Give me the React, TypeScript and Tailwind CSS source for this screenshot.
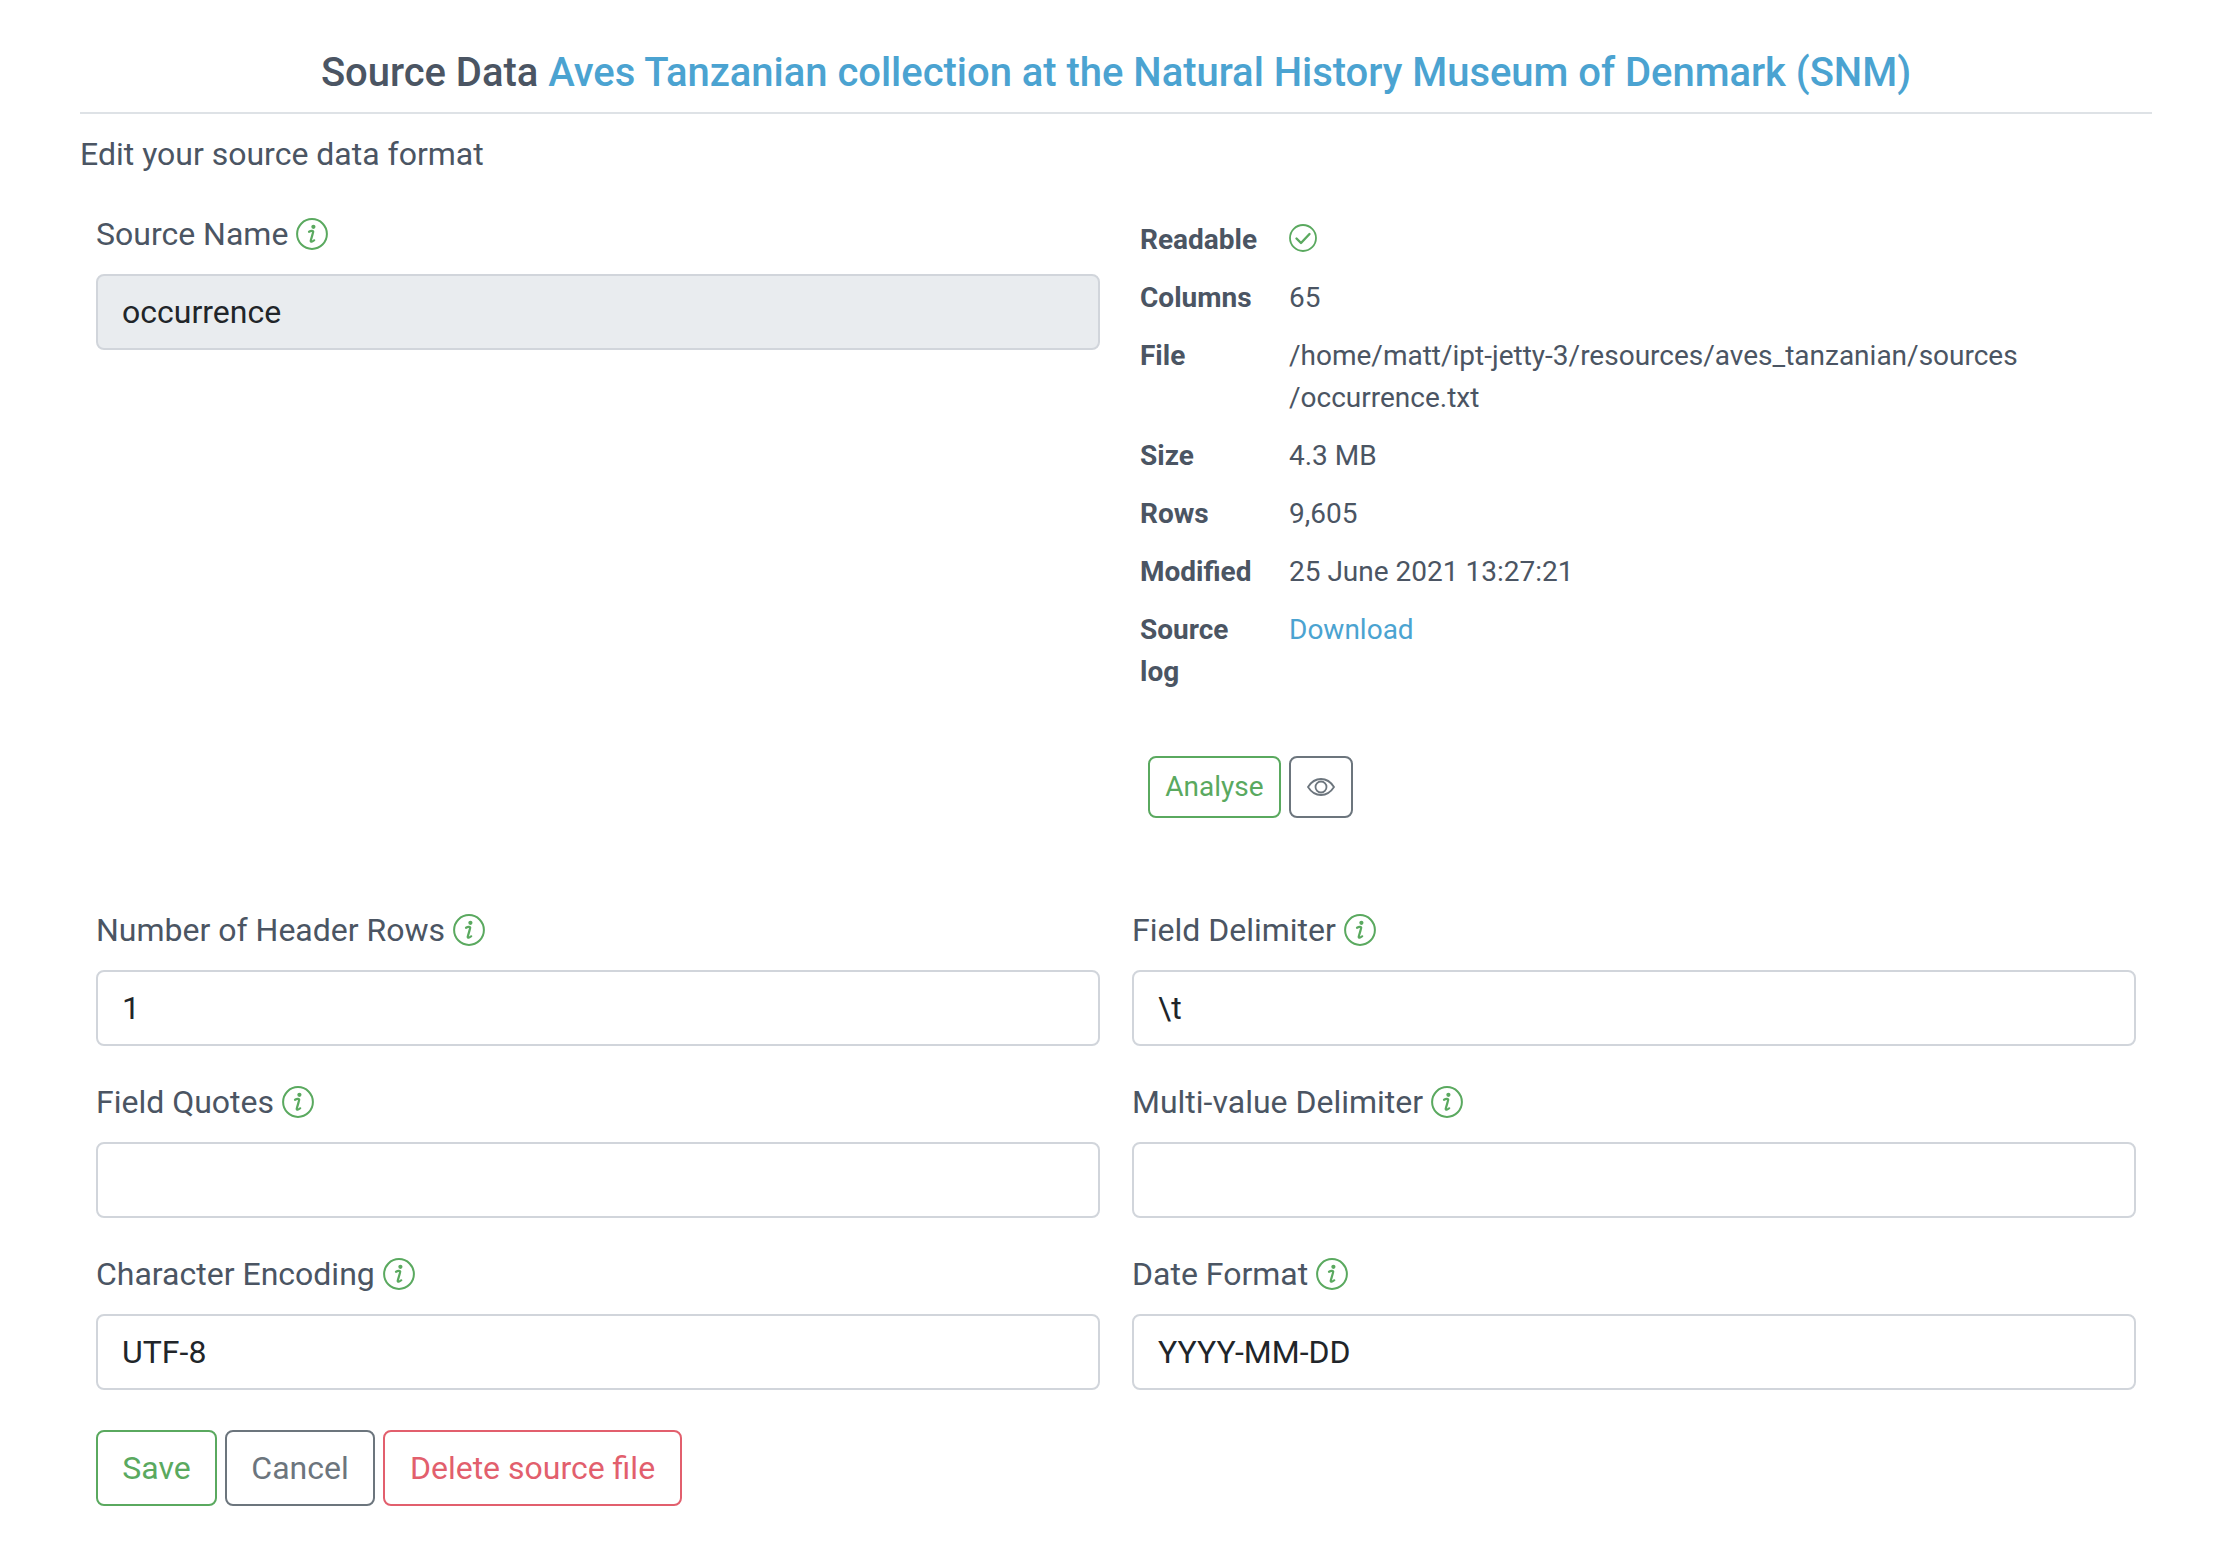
import React from 'react';

function InfoIcon() {
  return (
    <svg viewBox="0 0 32 32" className="inline-block w-8 h-8 ml-2 align-[-5px]" fill="none">
      <circle cx="16" cy="16" r="14.9" stroke="#5aa95f" strokeWidth="2" />
      <circle cx="17.4" cy="8.800" r="2.100" fill="#5aa95f" />
      <path d="M13 13.800c1.800-1 4-1.500 4.200-.3.100.9-2.400 8.300-2.500 9.300-.1 1.300 1.800 1 3.500-.5" stroke="#5aa95f" strokeWidth="2.200" strokeLinecap="round" />
    </svg>
  );
}

function Field({ label, value, disabled }: { label: string; value: string; disabled?: boolean }) {
  return (
    <div className="w-[1004px]">
      <label className="block h-12 leading-[48px] mb-4 text-[32px] text-[#4b5563] whitespace-nowrap">
        {label}
        <InfoIcon />
      </label>
      <div
        className={`h-[76px] flex items-center px-6 border-2 rounded-lg border-[#d1d5db] text-[32px] text-[#212529] ${
          disabled ? 'bg-[#e9ecef]' : 'bg-white'
        }`}
      >
        {value}
      </div>
    </div>
  );
}

const details = [
  { name: 'Columns', value: '65' },
  { name: 'File', value: '/home/matt/ipt-jetty-3/resources/aves_tanzanian/sources\n/occurrence.txt' },
  { name: 'Size', value: '4.3 MB' },
  { name: 'Rows', value: '9,605' },
  { name: 'Modified', value: '25 June 2021 13:27:21' },
];

export default function App() {
  return (
    <div className="h-[1546px] bg-white px-20 overflow-hidden font-['Roboto',sans-serif]">
      {/* Title */}
      <div className="h-[114px] pt-[47px] border-b-2 border-[#dee2e6] text-center">
        <h1 className="text-[40px] leading-[52px] font-medium tracking-[-0.03px] text-[#4b5563]">
          Source Data <span className="text-[#4ba3d1]">Aves Tanzanian collection at the Natural History Museum of Denmark (SNM)</span>
        </h1>
      </div>
      <p className="mt-4 text-[32px] leading-[48px] text-[#4b5563]">Edit your source data format</p>

      <div className="px-4">
        {/* Source name and details */}
        <div className="flex mt-8 gap-8">
          <Field label="Source Name" value="occurrence" disabled />
          <div className="pl-2 pt-[9px] text-[28px] leading-[42px] text-[#4b5563]">
            <div className="flex mb-4 h-[42px]">
              <span className="w-[149px] font-bold">Readable</span>
              <svg viewBox="0 0 28 28" className="w-7 h-7 mt-[5px]" fill="none" stroke="#5aa95f" strokeWidth="1.8">
                <circle cx="14" cy="14" r="13" />
                <path d="M7.500 14.500l4.500 4.500 8.500-9" strokeWidth="2.400" strokeLinecap="round" strokeLinejoin="round" />
              </svg>
            </div>
            {details.map((d) => (
              <div key={d.name} className="flex mb-4">
                <span className="w-[149px] font-bold">{d.name}</span>
                <span className="whitespace-pre-line">{d.value}</span>
              </div>
            ))}
            <div className="flex">
              <span className="w-[149px] font-bold">
                Source
                <br />
                log
              </span>
              <span className="text-[#4ba3d1]">Download</span>
            </div>
            <div className="flex gap-2 mt-[63px] ml-2">
              <button className="h-[62px] w-[133px] border-2 border-[#5aa95f] rounded-lg text-[#5aa95f]">Analyse</button>
              <button className="h-[62px] w-[64px] border-2 border-[#6c757d] rounded-lg flex items-center justify-center">
                <svg viewBox="0 0 28 20" className="w-7 h-5" fill="none" stroke="#6c757d" strokeWidth="1.8">
                  <path d="M1 10C4.5 4.5 9 2 14 2s9.5 2.5 13 8c-3.5 5.500-8 8-13 8S4.500 15.500 1 10z" />
                  <circle cx="14" cy="10" r="5.500" />
                </svg>
              </button>
            </div>
          </div>
        </div>

        {/* Format fields */}
        <div className="grid grid-cols-[1004px_1004px] gap-x-8 gap-y-8 mt-[88px]">
          <Field label="Number of Header Rows" value="1" />
          <Field label="Field Delimiter" value="\t" />
          <Field label="Field Quotes" value="" />
          <Field label="Multi-value Delimiter" value="" />
          <Field label="Character Encoding" value="UTF-8" />
          <Field label="Date Format" value="YYYY-MM-DD" />
        </div>

        <div className="flex gap-2 mt-10 text-[32px]">
          <button className="h-[76px] w-[121px] border-2 border-[#5aa95f] rounded-lg text-[#5aa95f]">Save</button>
          <button className="h-[76px] w-[150px] border-2 border-[#6c757d] rounded-lg text-[#6c757d]">Cancel</button>
          <button className="h-[76px] w-[299px] border-2 border-[#e25f6d] rounded-lg text-[#e25f6d]">Delete source file</button>
        </div>
      </div>
    </div>
  );
}
